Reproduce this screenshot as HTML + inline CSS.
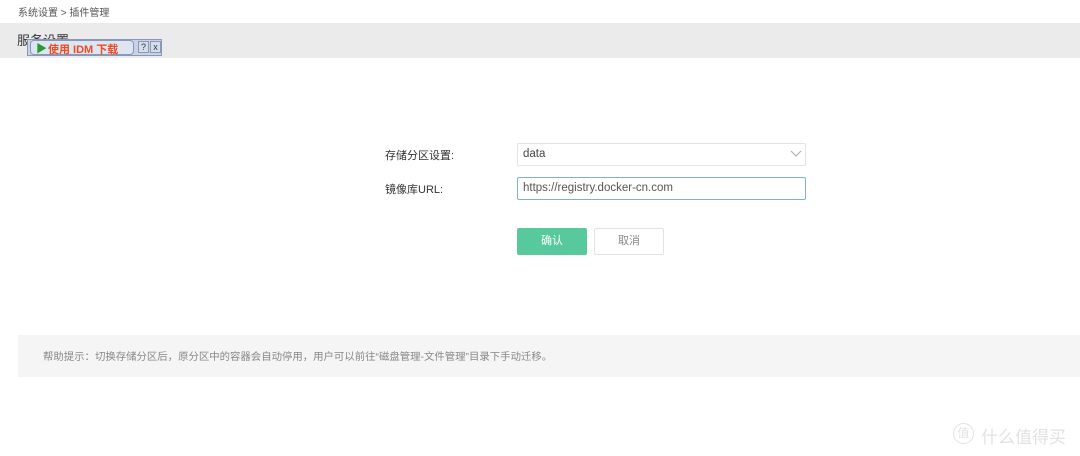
<!DOCTYPE html>
<html><head><meta charset="utf-8"><style>
*{margin:0;padding:0;box-sizing:border-box}
body{width:1080px;height:456px;background:#fff;font-family:"Liberation Sans","Noto Sans CJK SC",sans-serif;position:relative;overflow:hidden;color:#333}
.a{position:absolute}
</style></head><body>
<div class="a" style="left:18px;top:4px;font-size:10px;color:#555">系统设置 &gt; 插件管理</div>
<div class="a" style="left:0;top:23px;width:1080px;height:35px;background:#ebebeb"></div>
<div class="a" style="left:17px;top:30px;font-size:13px;color:#333">服务设置</div>
<div class="a" style="left:27px;top:39px;width:135px;height:17px;background:#c8d2e6;border:1px solid #8a98b8"></div>
<div class="a" style="left:30px;top:40px;width:104px;height:15px;background:#dde4f2;border:1px solid #8a98b8;border-radius:4px"></div>
<div class="a" style="left:36px;top:40px;font-size:11px;color:#2a9a2a">▶</div>
<div class="a" style="left:48px;top:41px;font-size:11px;font-weight:bold;color:#f04a20">使用 IDM 下载</div>
<div class="a" style="left:138px;top:41px;width:11px;height:12px;background:#d5dcea;border:1px solid #8a98b8;font-size:9px;text-align:center;color:#334">?</div>
<div class="a" style="left:150px;top:41px;width:11px;height:12px;background:#d5dcea;border:1px solid #8a98b8;font-size:9px;text-align:center;color:#334">x</div>
<div class="a" style="left:385px;top:147px;font-size:11px;color:#333">存储分区设置:</div>
<div class="a" style="left:517px;top:143px;width:289px;height:23px;border:1px solid #e3e3e3;border-radius:2px;font-size:11.5px;line-height:21px;padding:0 5px;color:#444">data</div>
<svg class="a" style="left:790px;top:150px" width="12" height="8"><path d="M1 1 L6 6 L11 1" stroke="#aaa" fill="none"/></svg>
<div class="a" style="left:385px;top:181px;font-size:11px;color:#333">镜像库URL:</div>
<div class="a" style="left:517px;top:177px;width:289px;height:23px;border:1px solid #7fb0d8;border-radius:2px;font-size:11.5px;line-height:21px;padding:0 5px;color:#555">https://registry.docker-cn.com</div>
<div class="a" style="left:517px;top:228px;width:70px;height:27px;background:#58c99c;border-radius:2px;color:#fff;font-size:11px;text-align:center;line-height:27px">确认</div>
<div class="a" style="left:594px;top:228px;width:70px;height:27px;border:1px solid #e3e3e3;border-radius:2px;color:#888;font-size:11px;text-align:center;line-height:25px">取消</div>
<div class="a" style="left:18px;top:335px;width:1062px;height:42px;background:#f5f5f5"></div>
<div class="a" style="left:43px;top:348px;font-size:10.4px;color:#888;white-space:nowrap">帮助提示：切换存储分区后，原分区中的容器会自动停用，用户可以前往“磁盘管理-文件管理”目录下手动迁移。</div>
<div class="a" style="left:953px;top:423px;width:21px;height:21px;border:1.5px solid #e2e2e2;border-radius:50%;font-size:12px;color:#e2e2e2;text-align:center;line-height:18px">值</div>
<div class="a" style="left:981px;top:423px;font-size:17px;color:#e2e2e2">什么值得买</div>
</body></html>
